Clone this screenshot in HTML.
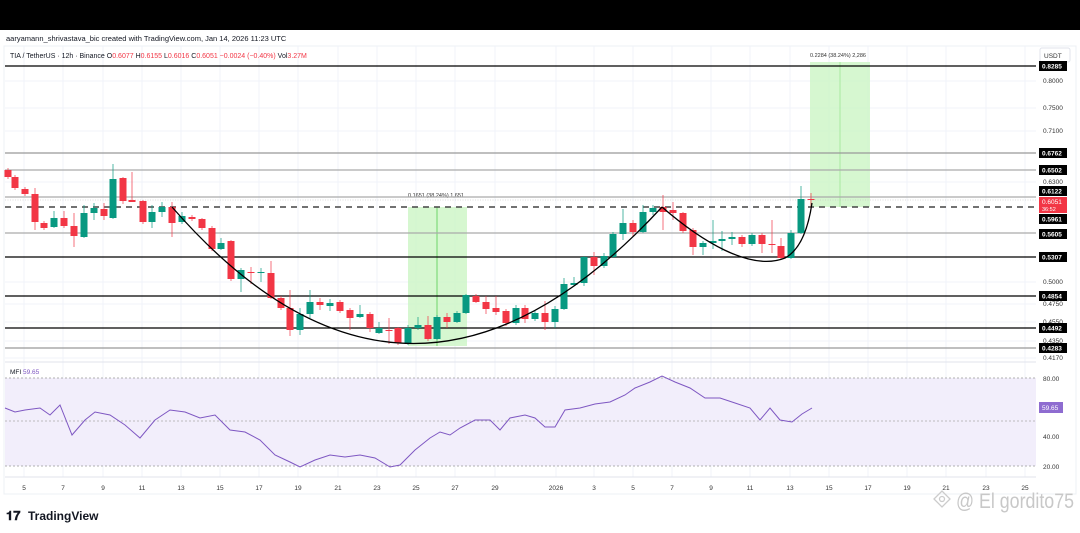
<!DOCTYPE html>
<html><head><meta charset="utf-8"><style>
body{margin:0;width:1080px;height:528px;overflow:hidden;background:#fff;font-family:"Liberation Sans",sans-serif}
svg text{font-family:"Liberation Sans",sans-serif}
</style></head><body>
<svg id="s" width="1080" height="528" xmlns="http://www.w3.org/2000/svg">
<rect x="0" y="0" width="1080" height="30" fill="#000"/>
<text x="6" y="41" font-size="7.5" fill="#131722">aaryamann_shrivastava_bic created with TradingView.com, Jan 14, 2026 11:23 UTC</text>
<rect x="4" y="46" width="1072" height="448" fill="none" stroke="#eef0f4"/>
<g id="grid"></g>
<rect x="408" y="207" width="59" height="139" fill="#ccf5c4" opacity="0.8"/>
<line x1="437" y1="207" x2="437" y2="346" stroke="#6fd46a" stroke-width="1"/>
<rect x="810" y="62" width="60" height="145" fill="#ccf5c4" opacity="0.8"/>
<line x1="840" y1="62" x2="840" y2="207" stroke="#a8e8a0" stroke-width="1"/>
<text x="408" y="197" font-size="5.5" fill="#333">0.1651 (38.24%) 1,651</text>
<text x="810" y="57" font-size="5.5" fill="#333">0.2284 (38.24%) 2,286</text>
<g stroke-width="1.3">
<line x1="5" y1="66" x2="1036" y2="66" stroke="#000"/>
<line x1="5" y1="153" x2="1036" y2="153" stroke="#999"/>
<line x1="5" y1="170" x2="1036" y2="170" stroke="#aaa"/>
<line x1="5" y1="197" x2="1036" y2="197" stroke="#aaa"/>
<line x1="5" y1="233" x2="1036" y2="233" stroke="#aaa"/>
<line x1="5" y1="257" x2="1036" y2="257" stroke="#000"/>
<line x1="5" y1="296" x2="1036" y2="296" stroke="#000"/>
<line x1="5" y1="328" x2="1036" y2="328" stroke="#000"/>
<line x1="5" y1="348" x2="1036" y2="348" stroke="#999"/>
</g>
<line x1="5" y1="200" x2="1036" y2="200" stroke="#bbb" stroke-width="0.6" stroke-dasharray="1,1.5"/>
<line x1="5" y1="207" x2="1036" y2="207" stroke="#444" stroke-width="1.6" stroke-dasharray="6,5"/>
<g id="c"></g>
<path d="M172,207 Q410,480 662,207" fill="none" stroke="#000" stroke-width="1.3"/>
<path d="M662,207 C700,240 750,272 785,258 C800,250 808,230 812,203" fill="none" stroke="#000" stroke-width="1.3"/>
<text x="10" y="58" font-size="7" fill="#131722">TIA / TetherUS · 12h · Binance <tspan fill="#131722">O</tspan><tspan fill="#f23645">0.6077</tspan> H<tspan fill="#f23645">0.6155</tspan> L<tspan fill="#f23645">0.6016</tspan> C<tspan fill="#f23645">0.6051 −0.0024 (−0.40%)</tspan> Vol<tspan fill="#f23645">3.27M</tspan></text>
<rect x="1040" y="48" width="30" height="14" rx="2" fill="#fff" stroke="#e0e3eb"/>
<text x="1044" y="58" font-size="6.5" fill="#333">USDT</text>
<g id="ax" font-size="6.5"></g>
<line x1="5" y1="362" x2="1036" y2="362" stroke="#e0e3eb"/>
<rect x="5" y="378" width="1031" height="88" fill="#f2eefb"/>
<line x1="5" y1="378" x2="1036" y2="378" stroke="#999" stroke-dasharray="2,2" stroke-width="0.7"/>
<line x1="5" y1="421" x2="1036" y2="421" stroke="#aaa" stroke-dasharray="2,2" stroke-width="0.7"/>
<line x1="5" y1="466" x2="1036" y2="466" stroke="#999" stroke-dasharray="2,2" stroke-width="0.7"/>
<text x="10" y="374" font-size="6.5" fill="#131722">MFI <tspan fill="#7e57c2">59.65</tspan></text>
<polyline fill="none" stroke="#7e57c2" stroke-width="1" points="5,408 15,412 25,410 40,408 50,415 60,405 72,435 85,420 95,412 110,415 125,425 140,438 155,420 170,410 185,412 200,418 215,415 230,430 245,432 260,440 275,455 290,462 300,467 315,460 330,455 345,457 360,455 375,458 390,467 400,465 415,450 430,438 440,432 450,435 460,428 475,420 490,420 500,430 510,418 525,415 535,418 545,427 555,427 565,410 580,408 595,404 610,402 625,395 635,388 650,382 662,376 675,382 690,388 705,398 720,398 735,403 750,408 760,420 770,408 780,420 792,422 802,414 812,408"/>
<text x="1043" y="381" font-size="6.5" fill="#333">80.00</text>
<rect x="1039" y="402" width="24" height="11" fill="#8e6cd0"/>
<text x="1042" y="410" font-size="6.5" fill="#fff">59.65</text>
<text x="1043" y="439" font-size="6.5" fill="#333">40.00</text>
<text x="1043" y="469" font-size="6.5" fill="#333">20.00</text>
<line x1="5" y1="477" x2="1036" y2="477" stroke="#e0e3eb"/>
<g id="dt" font-size="6.5" fill="#333" text-anchor="middle"></g>
<text x="6" y="520" font-size="13" font-weight="bold" fill="#131722">𝟏𝟕</text>
<text x="28" y="520" font-size="12" font-weight="bold" fill="#131722">TradingView</text>
<g stroke="#ccc" fill="none" stroke-width="1.3"><path d="M934,499 l8,-8 l8,8 l-8,8z"/><circle cx="942" cy="499" r="2.5"/></g>
<text x="956" y="508" font-size="21" fill="#c8c8c8" textLength="118" lengthAdjust="spacingAndGlyphs">@ El gordito75</text>
</svg>
<script>
var ns="http://www.w3.org/2000/svg";
function el(p,t,a,txt){var e=document.createElementNS(ns,t);for(var k in a)e.setAttribute(k,a[k]);if(txt)e.textContent=txt;p.appendChild(e);return e;}
var dates=[[24,"5"],[63,"7"],[103,"9"],[142,"11"],[181,"13"],[220,"15"],[259,"17"],[298,"19"],[338,"21"],[377,"23"],[416,"25"],[455,"27"],[495,"29"],[556,"2026"],[594,"3"],[633,"5"],[672,"7"],[711,"9"],[750,"11"],[790,"13"],[829,"15"],[868,"17"],[907,"19"],[946,"21"],[986,"23"],[1025,"25"]];
var g=document.getElementById("grid"),dt=document.getElementById("dt");
dates.forEach(function(d){el(g,"line",{x1:d[0],y1:46,x2:d[0],y2:477,stroke:"#f0f3fa"});el(dt,"text",{x:d[0],y:490},d[1]);});
[81,108,131,182,282,304,322,341,358].forEach(function(y){el(g,"line",{x1:5,y1:y,x2:1036,y2:y,stroke:"#f0f3fa"});});
var ax=document.getElementById("ax");
[[81,"0.8000"],[108,"0.7500"],[131,"0.7100"],[182,"0.6300"],[282,"0.5000"],[304,"0.4750"],[322,"0.4550"],[341,"0.4350"],[358,"0.4170"]].forEach(function(a){el(ax,"text",{x:1043,y:a[0]+2,fill:"#333"},a[1]);});
[[66,"0.8285"],[153,"0.6762"],[170,"0.6502"],[191,"0.6122"],[219,"0.5961"],[234,"0.5605"],[257,"0.5307"],[296,"0.4854"],[328,"0.4492"],[348,"0.4283"]].forEach(function(a){el(ax,"rect",{x:1039,y:a[0]-5,width:28,height:10,fill:"#000"});el(ax,"text",{x:1042,y:a[0]+2.5,fill:"#fff","font-weight":"bold"},a[1]);});
el(ax,"rect",{x:1039,y:197,width:28,height:16,fill:"#f23645"});
el(ax,"text",{x:1042,y:204,fill:"#fff"},"0.6051");el(ax,"text",{x:1042,y:211,fill:"#fff","font-size":"5.5"},"36:52");
var C=[[8,170,177,'r'],[15,177,188,'r'],[25,189,194,'r'],[35,194,222,'r',188,230],[44,223,228,'r'],[54,218,227,'g',211,228],[64,218,226,'r',211,228],[74,226,236,'r',213,247],[84,213,237,'g',205,238],[94,208,213,'g',203,220],[104,209,216,'r',203,220],[113,179,218,'g',164,219],[123,178,201,'r',177,204],[132,200,202,'r',172,202],[143,201,222,'r',200,224],[152,212,222,'g',205,228],[162,207,212,'g',202,217],[172,207,223,'r',202,237],[182,216,222,'g',212,224],[192,217,219,'r'],[202,219,228,'r',218,230],[212,228,249,'r'],[221,243,249,'g',238,250],[231,241,279,'r',240,281],[241,270,279,'g',268,292],[251,272,273,'r',267,284],[261,272,273,'g',268,282],[271,273,298,'r',261,299],[281,298,308,'r'],[290,308,330,'r',290,336],[300,314,330,'g',308,335],[310,302,314,'g',290,318],[320,302,305,'r',298,310],[330,303,306,'g',299,311],[340,302,311,'r',300,313],[350,310,318,'r',308,330],[360,314,317,'g',305,318],[370,314,328,'r',312,332],[379,328,333,'g',322,334],[389,330,331,'r',318,344],[398,328,343,'r',327,345],[408,328,343,'g',325,345],[418,325,328,'g',317,330],[428,325,339,'r',316,341],[437,317,339,'g',315,340],[447,317,322,'r',313,328],[457,313,322,'g',311,323],[466,295,313,'g',294,314],[476,296,302,'r',294,303],[486,302,309,'r',296,314],[496,308,312,'r',296,315],[506,311,323,'r',309,326],[516,308,323,'g',305,325],[525,308,319,'r',305,323],[535,313,319,'g',311,321],[545,313,322,'r',301,330],[555,309,322,'g',306,328],[564,284,309,'g',278,310],[574,283,285,'g',277,286],[584,257,283,'g',256,286],[594,257,266,'r',252,275],[604,256,266,'g',253,268],[613,234,257,'g',232,258],[623,223,234,'g',209,240],[633,223,232,'r',220,237],[643,212,232,'g',205,233],[653,208,212,'g',205,215],[663,207,212,'r',195,230],[673,210,213,'r',202,220],[683,213,231,'r',212,233],[693,230,247,'r',228,255],[703,243,247,'g',241,255],[713,241,243,'g',220,249],[722,239,241,'g',231,251],[732,237,239,'g',232,245],[742,237,244,'r',235,247],[752,235,244,'g',233,246],[762,235,244,'r',233,253],[772,244,245,'r',220,253],[781,246,258,'r',238,260],[791,233,258,'g',230,259],[801,199,233,'g',186,234],[811,199,200,'r',193,208]];
var cg=document.getElementById("c");
C.forEach(function(c){var col=c[3]=='g'?"#089981":"#f23645";var wt=c[4]||c[1]-2,wb=c[5]||c[2]+2;
el(cg,"line",{x1:c[0],y1:wt,x2:c[0],y2:wb,stroke:col,"stroke-width":1,opacity:0.7});
el(cg,"rect",{x:c[0]-3.5,y:c[1],width:7,height:Math.max(1,c[2]-c[1]),fill:col});});
</script>
</body></html>
